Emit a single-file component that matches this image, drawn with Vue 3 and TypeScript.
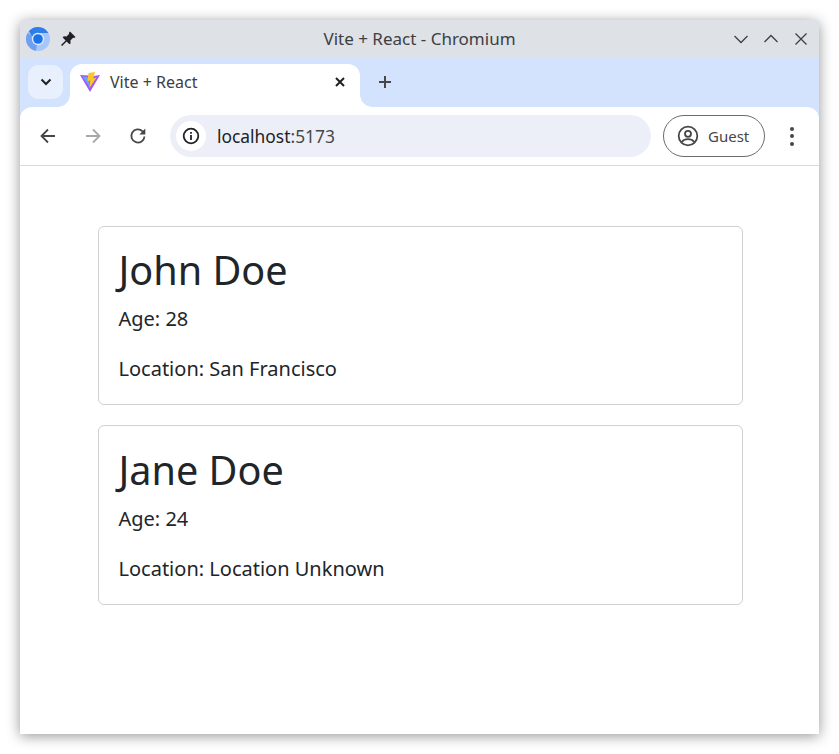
<script setup lang="ts">
interface Person {
  name: string;
  age: number;
  location: string;
}

const people: Person[] = [
  { name: 'John Doe', age: 28, location: 'San Francisco' },
  { name: 'Jane Doe', age: 24, location: 'Location Unknown' },
];
</script>

<template>
  <div class="desktop">
    <div class="window">
      <header class="titlebar">
        <div class="title-left">
          <svg class="app-icon" width="24" height="24" viewBox="0 0 24 24">
            <circle cx="12" cy="12" r="12" fill="#a6c6fa" />
            <path d="M12 12L1.600 6a12 12 0 0 0 8.300 17.800z" fill="#6fa0f0" />
            <path d="M12 0a12 12 0 0 1 10.400 6H12a6 6 0 0 0-5.600 3.800L2.800 4.300A12 12 0 0 1 12 0z" fill="#2f7de9" />
            <circle cx="12" cy="12" r="6.200" fill="#dbe8fd" />
            <circle cx="12" cy="12" r="4.800" fill="#1a73e8" />
          </svg>
          <svg class="pin" width="16" height="16" viewBox="0 0 16 16">
            <path d="M10 0.500l5.500 5.500-1.300 1.100-1.100-.3-2.700 2.700.2 2.700-1.100 1.100-2.900-2.900-4.500 4.600-1.100-1.100 4.600-4.500L2.700 6.400l1.100-1.100 2.700.2 2.700-2.700-.3-1.100z" fill="#202124" />
          </svg>
        </div>
        <span class="window-title">Vite + React - Chromium</span>
        <div class="window-controls">
          <svg width="16" height="16" viewBox="0 0 16 16"><path d="M1.500 5l6.500 6.500L14.500 5" /></svg>
          <svg width="16" height="16" viewBox="0 0 16 16"><path d="M1.500 11L8 4.500 14.500 11" /></svg>
          <svg width="16" height="16" viewBox="0 0 16 16"><path d="M2.500 2.500l11 11M13.500 2.500l-11 11" /></svg>
        </div>
      </header>

      <div class="tabstrip">
        <button class="tab-search">
          <svg width="12" height="8" viewBox="0 0 12 8"><path d="M1.500 1.500L6 6l4.500-4.500" /></svg>
        </button>
        <div class="tab">
          <svg class="favicon" width="20" height="20" viewBox="0 0 20 20">
            <path d="M0 3l10 17L20 3l-6.500 1L12 8 9 3.500z" fill="#a259f5" />
            <path d="M2.500 4.500l6.500 1 1 10z" fill="#62a8f6" />
            <path d="M8.500 1l6.500-1-1.800 6.200 3.300-.8L9.500 16l.8-7.500-2.800.7z" fill="#fdc527" />
          </svg>
          <span class="tab-label">Vite + React</span>
          <svg class="tab-close" width="10" height="10" viewBox="0 0 10 10"><path d="M1 1l8 8M9 1L1 9" /></svg>
        </div>
        <svg class="new-tab" width="12" height="12" viewBox="0 0 12 12"><path d="M6 0v12M0 6h12" /></svg>
      </div>

      <div class="toolbar">
        <svg class="nav" width="16" height="16" viewBox="0 0 16 16"><path d="M15 8H1.500M8 1.500L1.500 8 8 14.500" /></svg>
        <svg class="nav muted" width="16" height="16" viewBox="0 0 16 16"><path d="M1 8h13.500M8 1.500L14.500 8 8 14.500" /></svg>
        <svg class="nav reload" width="18" height="18" viewBox="0 0 18 18">
          <path d="M15.500 9.500a6.600 6.600 0 1 1-1.900-5.200L15.500 6" />
          <path class="solid" d="M16.300 1.500v6h-6z" />
        </svg>
        <div class="omnibox">
          <span class="site-info">
            <svg width="18" height="18" viewBox="0 0 18 18">
              <circle cx="9" cy="9" r="7.300" fill="none" stroke="#202124" stroke-width="1.800" />
              <path d="M8.100 8h1.800v5H8.100zM8.100 5h1.800v1.800H8.100z" fill="#202124" />
            </svg>
          </span>
          <span class="url">localhost<span class="port">:5173</span></span>
        </div>
        <div class="profile">
          <svg width="22" height="22" viewBox="0 0 22 22">
            <circle cx="11" cy="11" r="9.300" fill="none" stroke="#474747" stroke-width="1.800" />
            <circle cx="11" cy="8.800" r="3" fill="none" stroke="#474747" stroke-width="1.800" />
            <path d="M4.800 17c1.500-2 3.700-2.800 6.200-2.800s4.700.8 6.200 2.800" fill="none" stroke="#474747" stroke-width="1.800" />
          </svg>
          <span>Guest</span>
        </div>
        <div class="menu"><i></i><i></i><i></i></div>
      </div>

      <main class="page">
        <section v-for="person in people" :key="person.name" class="card">
          <h1>{{ person.name }}</h1>
          <p>Age: {{ person.age }}</p>
          <p>Location: {{ person.location }}</p>
        </section>
      </main>
    </div>
  </div>
</template>

<style>
html,
body {
  margin: 0;
  background: #fff;
}
</style>

<style scoped>
.desktop {
  box-sizing: border-box;
  width: 839px;
  height: 754px;
  padding: 20px;
  overflow: hidden;
  font-family: 'Noto Sans', sans-serif;
  color: #212529;
}

.window {
  display: flex;
  flex-direction: column;
  height: 714px;
  border-radius: 5px 5px 0 0;
  background: #d3e3fd;
  overflow: hidden;
  box-shadow: 0 2px 14px rgba(0, 0, 0, 0.42);
}

.titlebar {
  position: relative;
  display: flex;
  align-items: center;
  justify-content: space-between;
  flex: none;
  height: 37px;
  padding: 0 10px 0 6px;
  background: #dee1e6;
}

.title-left {
  display: flex;
  align-items: center;
  gap: 10px;
}

.window-title {
  position: absolute;
  left: 0;
  right: 0;
  text-align: center;
  font-size: 17px;
  color: #3c4043;
}

.window-controls {
  display: flex;
  gap: 14px;
}

.window-controls svg {
  fill: none;
  stroke: #3c4043;
  stroke-width: 1.300;
}

.tabstrip {
  display: flex;
  align-items: flex-end;
  flex: none;
  height: 50px;
  padding-left: 8px;
  background: #d3e3fd;
}

.tab-search {
  display: flex;
  align-items: center;
  justify-content: center;
  align-self: flex-start;
  width: 35px;
  height: 34px;
  margin-top: 8px;
  padding: 0;
  border: none;
  border-radius: 10px;
  background: #e8f0fe;
}

.tab-search svg {
  fill: none;
  stroke: #202124;
  stroke-width: 2;
}

.tab {
  position: relative;
  display: flex;
  align-items: center;
  box-sizing: border-box;
  width: 290px;
  height: 43px;
  margin-left: 7px;
  padding: 0 15px 7px 10px;
  border-radius: 12px 12px 0 0;
  background: #fff;
}

.tab::before,
.tab::after {
  content: '';
  position: absolute;
  bottom: 0;
  width: 12px;
  height: 12px;
}

.tab::before {
  left: -12px;
  background: radial-gradient(circle at 0 0, transparent 11.500px, #fff 12px);
}

.tab::after {
  right: -12px;
  background: radial-gradient(circle at 100% 0, transparent 11.500px, #fff 12px);
}

.favicon {
  flex: none;
}

.tab-label {
  flex: 1;
  margin-left: 10px;
  font-size: 16px;
  color: #3c4043;
}

.tab-close {
  fill: none;
  stroke: #202124;
  stroke-width: 2;
}

.new-tab {
  align-self: flex-start;
  margin: 19px 0 0 19px;
  fill: none;
  stroke: #474747;
  stroke-width: 2;
}

.toolbar {
  display: flex;
  align-items: center;
  flex: none;
  box-sizing: border-box;
  height: 59px;
  padding: 0 0 0 20px;
  border-bottom: 1px solid #dadce0;
  border-radius: 12px 12px 0 0;
  background: #fff;
}

.nav {
  flex: none;
  margin-right: 29px;
  fill: none;
  stroke: #474747;
  stroke-width: 1.800;
}

.nav.muted {
  stroke: #a8a8a8;
}

.nav.reload {
  margin-left: -1px;
}

.nav .solid {
  fill: #474747;
  stroke: none;
}

.omnibox {
  display: flex;
  align-items: center;
  flex: none;
  width: 481px;
  height: 42px;
  margin-left: -6px;
  border-radius: 21px;
  background: #eceff8;
}

.site-info {
  display: flex;
  align-items: center;
  justify-content: center;
  width: 30px;
  height: 30px;
  margin-left: 6px;
  border-radius: 50%;
  background: #fff;
}

.url {
  margin-left: 11px;
  font-size: 17.400px;
  color: #202124;
}

.port {
  color: #474747;
}

.profile {
  display: flex;
  align-items: center;
  flex: none;
  gap: 9px;
  box-sizing: border-box;
  width: 102px;
  height: 42px;
  margin-left: 12px;
  padding-left: 13px;
  border: 1px solid #6b6b6b;
  border-radius: 21px;
  font-size: 15px;
  color: #474747;
}

.menu {
  display: flex;
  flex-direction: column;
  align-items: center;
  gap: 3.500px;
  margin-left: 25px;
}

.menu i {
  width: 4px;
  height: 4px;
  border-radius: 50%;
  background: #474747;
}

.page {
  flex: 1;
  display: flex;
  flex-direction: column;
  gap: 20px;
  padding: 60px 76px 0 78px;
  background: #fff;
}

.card {
  box-sizing: border-box;
  height: 179.400px;
  padding: 19px 19.500px 0;
  border: 1px solid #d0d0d0;
  border-radius: 6px;
}

.card + .card {
  margin-top: -0.400px;
  height: 180px;
  padding-top: 20px;
}

.card h1 {
  margin: 0 0 8px;
  font-size: 39.600px;
  font-weight: 400;
  line-height: 48px;
}

.card p {
  margin: 0 0 16px;
  font-size: 20px;
  line-height: 34px;
}
</style>
